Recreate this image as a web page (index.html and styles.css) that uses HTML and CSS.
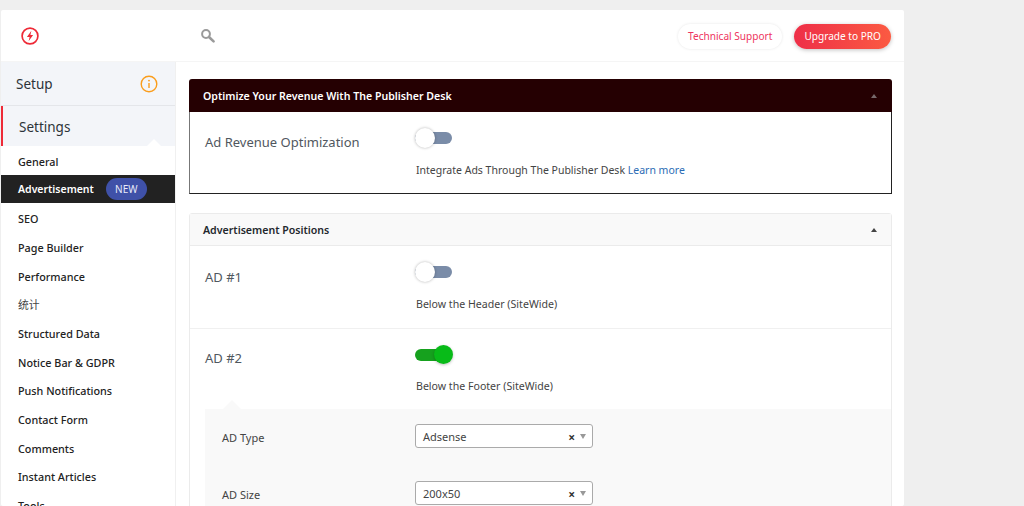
FILE: index.html
```html
<!DOCTYPE html>
<html lang="en">
<head>
<meta charset="utf-8">
<title>Settings</title>
<link rel="stylesheet" href="styles.css">
</head>
<body>
<div class="card">
  <header class="topbar">
    <div class="logo">
      <svg width="20" height="20" viewBox="0 0 20 20"><circle cx="10" cy="10" r="7.9" fill="none" stroke="#ee2a37" stroke-width="1.7"/><path d="M11.4 4.8 6.9 10.9h2.7L8.6 15.2l4.5-6.1h-2.7z" fill="#ee2a37"/></svg>
    </div>
    <div class="search">
      <svg width="16" height="16" viewBox="0 0 16 16"><circle cx="6" cy="6" r="3.9" fill="none" stroke="#9a9a9a" stroke-width="2"/><path d="M9 9l4.6 4.4" stroke="#9a9a9a" stroke-width="2.6" stroke-linecap="round"/></svg>
    </div>
    <div class="actions">
      <a class="btn-support">Technical Support</a>
      <a class="btn-upgrade">Upgrade to PRO</a>
    </div>
  </header>
  <div class="columns">
    <aside class="sidebar">
      <div class="setup">
        <span>Setup</span>
        <svg width="18" height="18" viewBox="0 0 18 18"><circle cx="9" cy="9" r="7.8" fill="none" stroke="#fa9d1c" stroke-width="1.4"/><path d="M9 8v5" stroke="#fa9d1c" stroke-width="1.4"/><circle cx="9" cy="5.6" r=".9" fill="#fa9d1c"/></svg>
      </div>
      <div class="settings">Settings</div>
      <nav class="nav">
        <a class="nav-item">General</a>
        <a class="nav-item active">Advertisement <span class="badge">NEW</span></a>
        <a class="nav-item">SEO</a>
        <a class="nav-item">Page Builder</a>
        <a class="nav-item">Performance</a>
        <a class="nav-item cjk">统计</a>
        <a class="nav-item">Structured Data</a>
        <a class="nav-item">Notice Bar &amp; GDPR</a>
        <a class="nav-item">Push Notifications</a>
        <a class="nav-item">Contact Form</a>
        <a class="nav-item">Comments</a>
        <a class="nav-item">Instant Articles</a>
        <a class="nav-item">Tools</a>
      </nav>
    </aside>
    <main class="content">
      <section class="panel dark">
        <h2 class="panel-head"><span>Optimize Your Revenue With The Publisher Desk</span><i class="caret"></i></h2>
        <div class="row first">
          <div class="row-label">Ad Revenue Optimization</div>
          <div class="row-field">
            <div class="switch"><i class="knob"></i></div>
            <p class="hint">Integrate Ads Through The Publisher Desk <a>Learn more</a></p>
          </div>
        </div>
      </section>
      <section class="panel">
        <h2 class="panel-head"><span>Advertisement Positions</span><i class="caret"></i></h2>
        <div class="row">
          <div class="row-label">AD #1</div>
          <div class="row-field">
            <div class="switch"><i class="knob"></i></div>
            <p class="hint">Below the Header (SiteWide)</p>
          </div>
        </div>
        <div class="row ruled">
          <div class="row-label">AD #2</div>
          <div class="row-field">
            <div class="switch on"><i class="knob"></i></div>
            <p class="hint">Below the Footer (SiteWide)</p>
          </div>
        </div>
        <div class="sub">
          <div class="sub-row">
            <label>AD Type</label>
            <div class="select"><span>Adsense</span><b>×</b><i></i></div>
          </div>
          <div class="sub-row">
            <label>AD Size</label>
            <div class="select"><span>200x50</span><b>×</b><i></i></div>
          </div>
        </div>
      </section>
    </main>
  </div>
</div>
</body>
</html>
```
FILE: styles.css
```css
* { box-sizing: border-box; }
html, body { margin: 0; height: 506px; overflow: hidden; }
body {
  background: #efefef;
  padding: 10px 120px 0 1px;
  font-family: "Noto Sans", "Noto Sans CJK SC", sans-serif;
  color: #333;
}
.card { background: #fff; height: 496px; overflow: hidden; border-radius: 2px; }
.topbar { height: 51px; display: flex; align-items: center; padding: 1px 13px 0 19px; }
.logo { width: 20px; height: 20px; }
.logo svg, .search svg { display: block; }
.search { margin-left: 160px; }
.actions { margin-left: auto; display: flex; gap: 12px; align-items: center; }
.btn-support, .btn-upgrade { border-radius: 13px; font-size: 10.1px; white-space: nowrap; }
.btn-support {
  height: 25px; line-height: 25px; padding: 0 10px; color: #ee3560; background: #fff;
  box-shadow: 0 0 3px rgba(0,0,0,.1);
}
.btn-upgrade {
  height: 25px; line-height: 25px; padding: 0 10px; color: #fff;
  background: linear-gradient(90deg, #ee2f48, #fb5a42);
  box-shadow: 0 1px 4px rgba(0,0,0,.25);
}
.columns { display: flex; border-top: 1px solid #f5f5f5; }
.sidebar { width: 175px; flex: none; border-right: 1px solid #f0f0f0; }
.setup {
  height: 44px; background: #f3f5f9; border-bottom: 1px solid #e4e6ea;
  display: flex; align-items: center; justify-content: space-between;
  padding: 1px 17px 0 15px; font-size: 13.5px; color: #2c3338;
}
.settings {
  position: relative; height: 40px; background: #f3f5f9; border-left: 2px solid #ee2a37;
  padding-left: 16px; line-height: 42px; font-size: 13.5px; color: #2c3338;
}
.settings::after {
  content: ""; position: absolute; right: 14px; bottom: 0;
  border: 7px solid transparent; border-top: 0; border-bottom-color: #fff;
}
.nav { display: flex; flex-direction: column; }
.nav-item {
  height: 28.67px; line-height: 32px; padding-left: 17px; font-size: 10.8px; font-weight: 500;
  color: #222; white-space: nowrap; flex: none;
}
.nav-item.cjk { font-weight: 400; color: #444; }
.nav-item.active {
  background: #222; color: #fff; font-weight: 600; font-size: 10.5px;
  display: flex; align-items: center; gap: 12px; padding-top: 1px;
}
.badge {
  background: #3f51a8; color: #e8ebfa; border-radius: 12px; width: 41px; height: 22px;
  line-height: 22px; text-align: center; font-size: 10px; font-weight: 400; margin-top: -1px;
}
.content { flex: 1; padding: 17px 12px 0 13px; }
.panel { border: 1px solid #ebebeb; border-radius: 3px 3px 0 0; margin-bottom: 19px; }
.panel-head {
  margin: 0; height: 32px; padding: 0 13px; display: flex; align-items: center; justify-content: space-between;
  background: #f9f9f9; border-bottom: 1px solid #ebebeb; font-size: 10.6px; font-weight: 600; color: #23282d;
}
.caret { border: 3px solid transparent; border-top: 0; border-bottom: 4px solid #444; margin-right: 1px; }
.panel.dark { border: 0; }
.dark .panel-head { height: 33px; padding: 0 14px; background: #250002; border: 0; color: #fff; border-radius: 3px 3px 0 0; }
.dark .caret { border-bottom-color: #77696b; }
.row { display: flex; height: 82px; padding: 15px 15px 0; }
.first { height: 82px; border: 1px solid #222; border-top: 0; border-left-color: #777; padding: 14px 15px 0; }
.first .switch { margin-top: 6px; }
.first .hint { font-size: 10.5px; }
.ruled { height: 81px; border-top: 1px solid #f0f0f0; padding-top: 13px; }
.ruled .switch { margin-top: 7px; }
.row-label { width: 210px; flex: none; font-size: 13px; line-height: 32px; color: #50575e; }
.switch {
  position: relative; width: 37px; height: 12px; margin-top: 5px; border-radius: 6px; background: #7a8ca8;
}
.knob {
  position: absolute; left: 0; top: -4px; width: 20px; height: 20px; border-radius: 50%;
  background: #fff; box-shadow: 0 0 3px rgba(0,0,0,.3);
}
.switch.on { background: #16a11e; }
.switch.on .knob { left: 19px; top: -4px; width: 19px; height: 19px; background: #08bb18; box-shadow: 0 1px 3px rgba(0,0,0,.25); }
.hint { margin: 19px 0 0 1px; font-size: 10.6px; line-height: 14px; color: #444; white-space: nowrap; }
.ruled .hint { margin-top: 18px; }
.hint a { color: #2b6cb5; }
.sub { position: relative; margin-left: 15px; background: #f9f9f9; padding: 15px 17px 0; height: 120px; }
.sub::before {
  content: ""; position: absolute; left: 18px; top: -9px;
  border: 9px solid transparent; border-top: 0; border-bottom-color: #f9f9f9;
}
.sub-row { display: flex; height: 57px; align-items: flex-start; }
.sub-row label { width: 193px; flex: none; font-size: 11px; line-height: 28px; color: #444; }
.select {
  width: 178px; height: 24px; border: 1px solid #aaa; border-radius: 3px; background: #fff;
  display: flex; align-items: center; padding: 0 6px 0 7px; font-size: 11px; color: #444;
}
.select span { flex: 1; }
.select b { font-size: 12px; font-weight: 700; color: #333; margin-right: 5px; line-height: 1; padding-top: 3px; }
.select i { border: 3.5px solid transparent; border-bottom: 0; border-top: 5px solid #999; margin-top: 1px; }
```
